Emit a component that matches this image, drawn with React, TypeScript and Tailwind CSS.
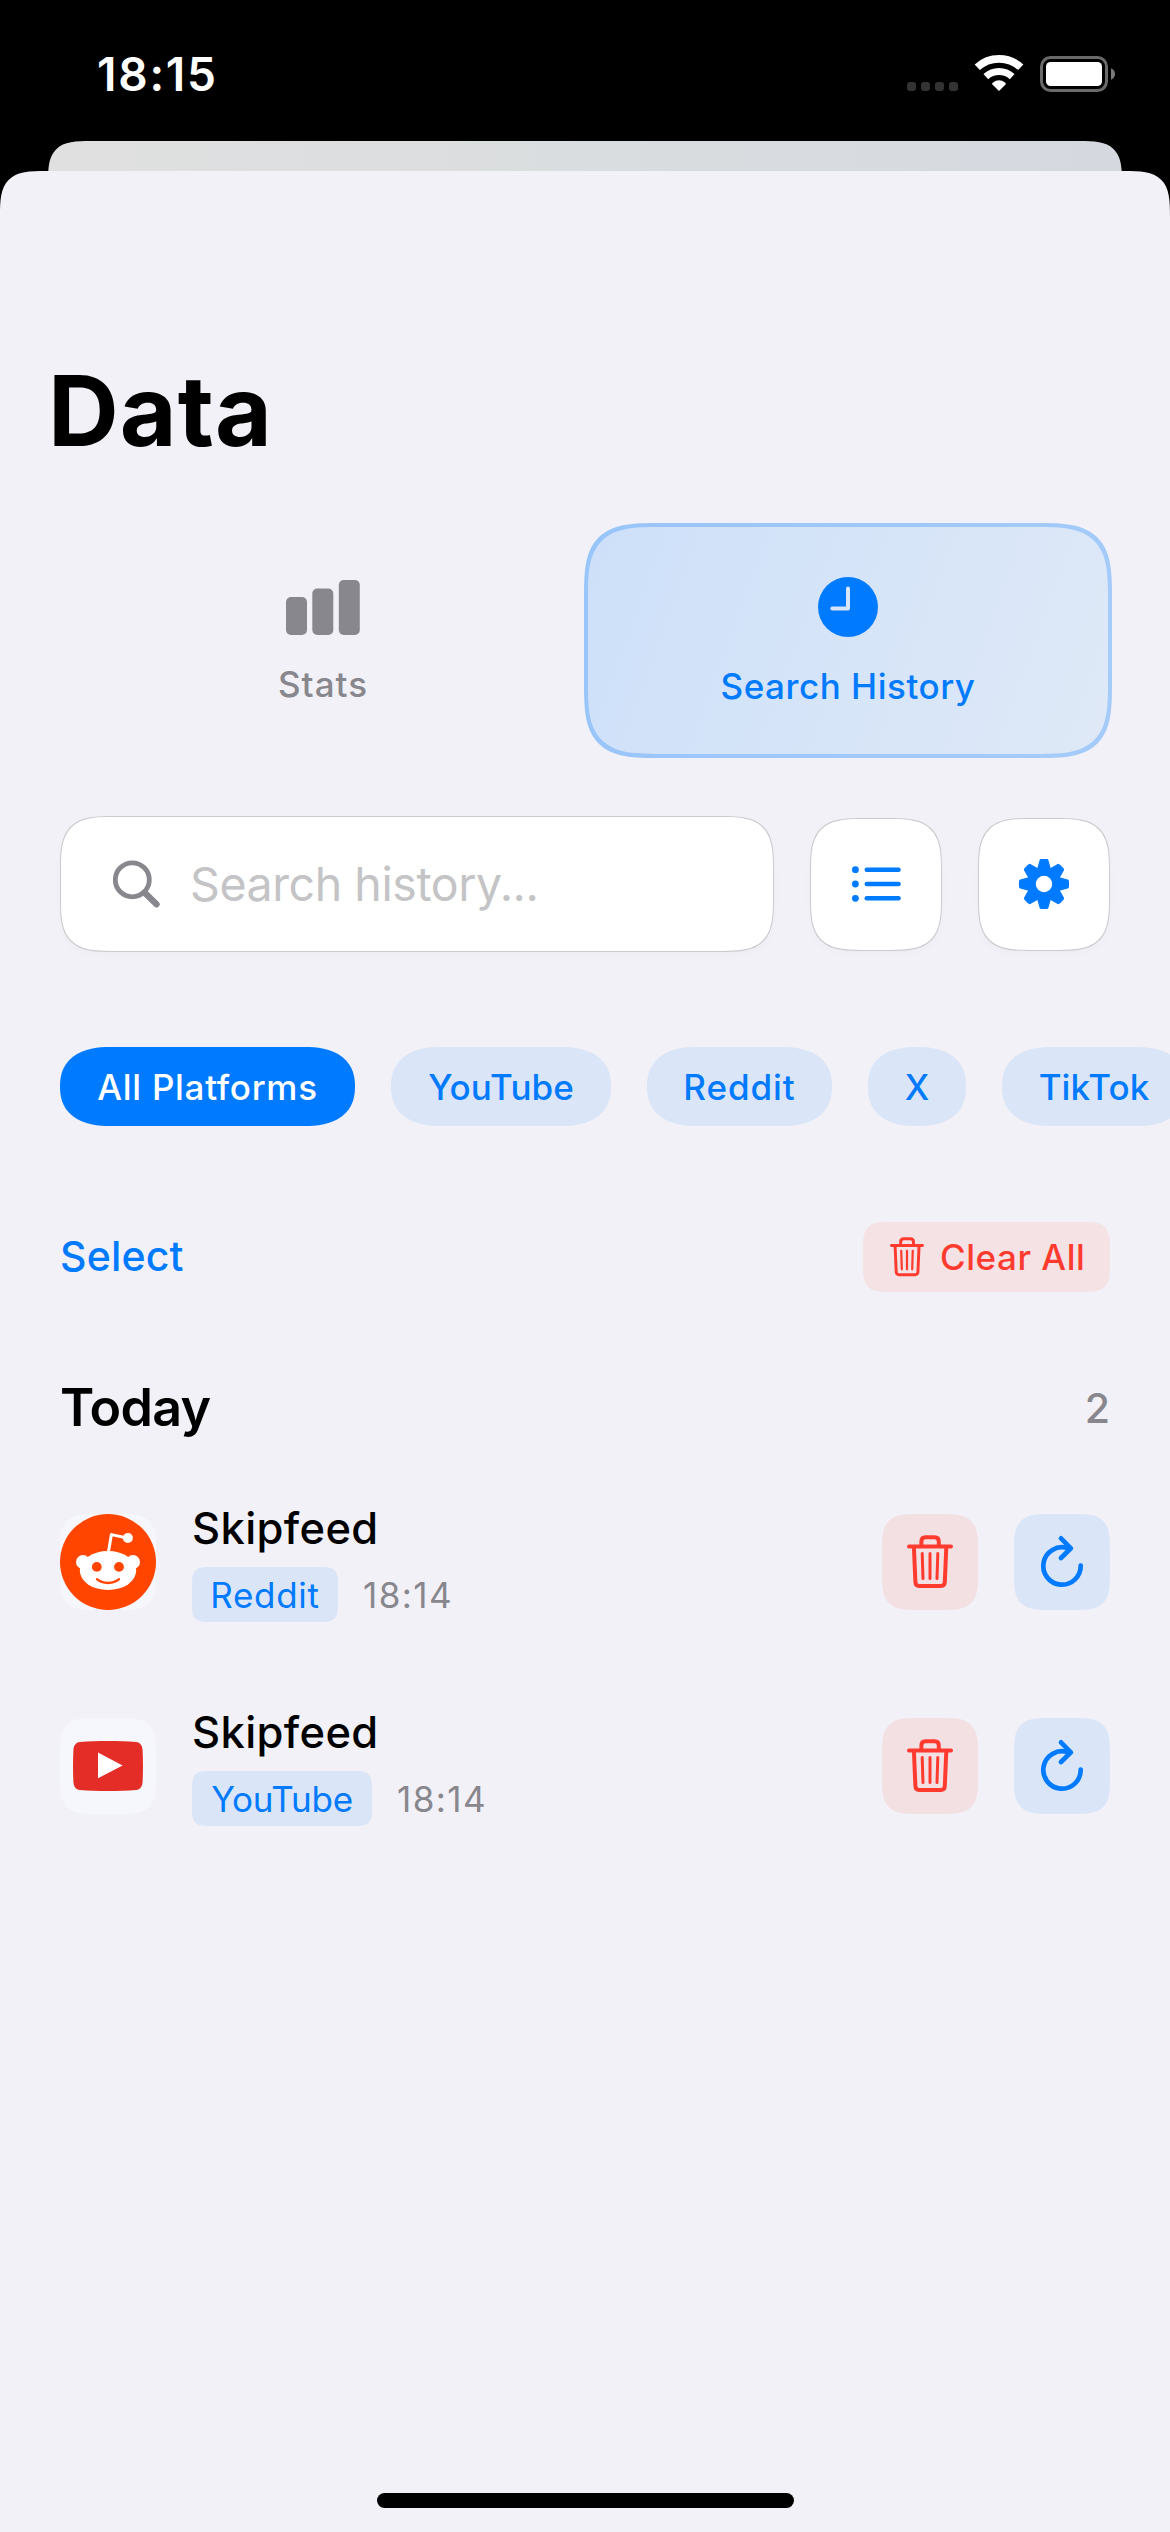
import type { ReactNode } from "react";

function StatusBar() {
  return (
    <header className="flex h-[141px] shrink-0 items-start justify-between pr-[55px] pl-[97px]">
      <div className="mt-[44px] text-[46px] leading-[60px] font-semibold tracking-[1.75px] text-white">18:15</div>
      <div className="mt-[54px] flex items-start">
        <div className="mt-[28px] flex gap-[5px]">
          <span className="h-[9px] w-[9px] rounded-[3px] bg-[#333333]" />
          <span className="h-[9px] w-[9px] rounded-[3px] bg-[#333333]" />
          <span className="h-[9px] w-[9px] rounded-[3px] bg-[#333333]" />
          <span className="h-[9px] w-[9px] rounded-[3px] bg-[#333333]" />
        </div>
        <svg className="ml-[16px]" width="50" height="38" viewBox="0 0 50 38" fill="none">
          <path d="M3.25 13.26A32.2 32.2 0 0 1 46.75 13.26" stroke="#fff" strokeWidth="7.7" />
          <path d="M11.83 22.62A19.5 19.5 0 0 1 38.17 22.62" stroke="#fff" strokeWidth="7" />
          <path d="M25 37L18.2 30.3Q17.8 29.1 19 28.4A10.7 10.7 0 0 1 31 28.4Q32.2 29.1 31.8 30.3Z" fill="#fff" />
        </svg>
        <svg className="mt-[2px] ml-[16px]" width="75" height="36" viewBox="0 0 75 36" fill="none">
          <rect x="1.5" y="1.5" width="65" height="33" rx="9" stroke="#6a6a6a" strokeWidth="3" />
          <rect x="6" y="6" width="56" height="24" rx="4.5" fill="#fff" />
          <path d="M71 12.3C73.4 13.3 75 15.4 75 18C75 20.6 73.4 22.7 71 23.7Z" fill="#7a7a7a" />
        </svg>
      </div>
    </header>
  );
}

function TrashIcon({ width, height }: { width: number; height: number }) {
  return (
    <svg width={width} height={height} viewBox="0 0 46 54" fill="none" stroke="#ff3b30" strokeLinecap="round" strokeLinejoin="round">
      <path d="M2 11.4H44" strokeWidth="4" />
      <path d="M14.4 11V6.4Q14.4 2.2 18.6 2.2H27.6Q31.8 2.2 31.8 6.4V11" strokeWidth="4" strokeLinecap="butt" />
      <path d="M6.9 12L8.4 47Q8.6 51 12.2 51H34Q37.6 51 37.8 47L39.3 12" strokeWidth="4" strokeLinecap="butt" />
      <path d="M15.2 18.6L16 43.6M23 18.6V43.6M30.8 18.6L30 43.6" strokeWidth="3" />
    </svg>
  );
}

function RefreshIcon() {
  return (
    <svg width="48" height="60" viewBox="0 0 48 60" fill="none" stroke="#007aff" strokeWidth="4.7" strokeLinecap="round" strokeLinejoin="round">
      <path d="M42.7 33.6A18.7 18.7 0 1 1 29.5 16.1" />
      <path d="M23 6.3L32.9 16.3L23 26" />
    </svg>
  );
}

function GearIcon() {
  return (
    <svg width="52" height="52" viewBox="-26 -26 52 52" fill="#007aff" stroke="#007aff" strokeWidth="3" strokeLinejoin="round">
      <circle r="15.8" />
      {[0, 45, 90, 135, 180, 225, 270, 315].map((a) => (
        <path key={a} d="M-5.3 -15L-3 -23.4Q0 -23.8 3 -23.4L5.3 -15Z" transform={`rotate(${a})`} />
      ))}
      <circle r="8.2" fill="#fff" stroke="none" />
    </svg>
  );
}

function ListIcon() {
  return (
    <svg width="50" height="38" viewBox="0 0 50 38" fill="#007aff">
      {[4.7, 19, 33.3].map((y) => (
        <g key={y}>
          <circle cx="4.4" cy={y} r="3.4" />
          <rect x="13.5" y={y - 2.2} width="36.3" height="4.4" rx="2.2" />
        </g>
      ))}
    </svg>
  );
}

function RedditLogo() {
  return (
    <svg width="96" height="96" viewBox="0 0 96 96">
      <circle cx="48" cy="48" r="48" fill="#ff4500" />
      <path d="M48.3 39L51.4 20.6L66 23.7" fill="none" stroke="#fff" strokeWidth="3" strokeLinejoin="round" />
      <circle cx="67.9" cy="24" r="5" fill="#fff" />
      <circle cx="23" cy="48" r="7" fill="#fff" />
      <circle cx="73" cy="48" r="7" fill="#fff" />
      <ellipse cx="48" cy="56.6" rx="28.2" ry="19.5" fill="#fff" />
      <circle cx="36.8" cy="52.9" r="4.9" fill="#ff4500" />
      <circle cx="59" cy="52.9" r="4.9" fill="#ff4500" />
      <path d="M37 65.2C42.5 70.2 53.5 70.2 59 65.2" fill="none" stroke="#ff4500" strokeWidth="2.4" strokeLinecap="round" />
    </svg>
  );
}

function YouTubeLogo() {
  return (
    <svg width="96" height="96" viewBox="0 0 96 96">
      <path
        d="M20 24C36 22.7 60 22.7 76 24C80.3 24.3 82.2 27.5 82.6 32C83.1 42 83.1 54 82.6 64C82.2 68.5 80.3 71.7 76 72C60 73.3 36 73.3 20 72C15.7 71.7 13.8 68.5 13.4 64C12.9 54 12.9 42 13.4 32C13.8 27.5 15.7 24.3 20 24Z"
        fill="#e52d27"
      />
      <path d="M38 34.6L62.6 47.5L38 60.3Z" fill="#fff" />
    </svg>
  );
}

function SquareButton({ children }: { children: ReactNode }) {
  return (
    <button className="flex h-[133px] w-[132px] items-center justify-center rounded-[55px] border border-[#cbcbcf] bg-white shadow-[0_3px_8px_rgba(0,0,0,0.02)] [corner-shape:superellipse(1.7)]">
      {children}
    </button>
  );
}

function Pill({ label, className }: { label: string; className: string }) {
  return (
    <button
      className={`flex h-[79px] shrink-0 items-center justify-center rounded-[50px/39.5px] text-[35px] leading-[42px] font-medium [corner-shape:superellipse(1.25)] ${className}`}
    >
      {label}
    </button>
  );
}

interface EntryProps {
  logo: ReactNode;
  platform: string;
  badgeClass: string;
}

function HistoryRow({ logo, platform, badgeClass }: EntryProps) {
  return (
    <div className="flex h-[122px] items-center">
      <div className="h-[96px] w-[96px] shrink-0 overflow-hidden rounded-[36px] bg-[#f5f7fc] [corner-shape:superellipse(1.7)]">{logo}</div>
      <div className="ml-[36px] flex h-[122px] flex-1 flex-col">
        <div className="text-[43.5px] leading-[54px] font-medium tracking-[0.37px] text-black">Skipfeed</div>
        <div className="mt-[12px] flex items-center gap-[25px]">
          <span
            className={`flex h-[55px] items-center justify-center rounded-[18px] bg-[#dae5f7] text-[35px] leading-[42px] text-[#007aff] [corner-shape:superellipse(1.7)] ${badgeClass}`}
          >
            {platform}
          </span>
          <span className="text-[35px] leading-[42px] tracking-[1.45px] text-[#88878d]">18:14</span>
        </div>
      </div>
      <button className="flex h-[96px] w-[96px] items-center justify-center rounded-[36px] bg-[#f3e0e3] [corner-shape:superellipse(1.7)]">
        <TrashIcon width={46} height={54} />
      </button>
      <button className="ml-[36px] flex h-[96px] w-[96px] items-center justify-center rounded-[36px] bg-[#dae5f7] [corner-shape:superellipse(1.7)]">
        <RefreshIcon />
      </button>
    </div>
  );
}

export default function App() {
  return (
    <div className="flex h-[2532px] w-[1170px] flex-col overflow-hidden bg-black font-['Inter',sans-serif]">
      <StatusBar />
      <div className="mx-[48px] h-[30px] shrink-0 overflow-hidden">
        <div className="h-[90px] rounded-t-[43px] bg-linear-to-r from-[#e0e0e0] via-[#dadddf] to-[#d5d8df] [corner-shape:superellipse(1.7)]" />
      </div>
      <main className="flex flex-1 flex-col rounded-t-[46px] bg-[#f2f1f7] px-[60px] [corner-shape:superellipse(1.7)]">
        <h1 className="mt-[180px] -ml-[12px] text-[98px] leading-[120px] font-bold tracking-[1px] text-black">Data</h1>

        <nav className="mt-[52px] -mr-[2px] flex h-[235px] shrink-0">
          <button className="flex w-[524px] flex-col items-center pt-[57px] pl-[2px] text-[#88878d]">
            <svg width="74" height="55" viewBox="0 0 74 55" fill="#88878d">
              <rect x="0" y="17" width="21" height="38" rx="5" />
              <rect x="26.3" y="8.5" width="21" height="46.5" rx="5" />
              <rect x="52.8" y="0" width="21" height="55" rx="5" />
            </svg>
            <span className="mt-[28px] text-[35px] leading-[42px] font-medium tracking-[1px]">Stats</span>
          </button>
          <button className="flex flex-1 flex-col items-center rounded-[76px] border-4 border-[rgba(0,122,255,0.26)] bg-linear-[110deg] from-[#cde0f9] to-[#dfe9f7] bg-origin-border pt-[50px] text-[#007aff] [corner-shape:superellipse(1.7)]">
            <svg width="60" height="60" viewBox="0 0 60 60">
              <circle cx="30" cy="30" r="30" fill="#007aff" />
              <path d="M30 11.5V31.4H14.3" fill="none" stroke="#d7e5f8" strokeWidth="4" strokeLinecap="round" strokeLinejoin="round" />
            </svg>
            <span className="mt-[28px] text-[35px] leading-[42px] font-medium tracking-[0.53px]">Search History</span>
          </button>
        </nav>

        <div className="mt-[58px] flex h-[136px] shrink-0 items-center gap-[36px]">
          <div className="flex h-[136px] w-[714px] items-center rounded-[55px] border border-[#cbcbcf] bg-white pl-[52px] shadow-[0_3px_8px_rgba(0,0,0,0.02)] [corner-shape:superellipse(1.7)]">
            <svg width="48" height="48" viewBox="0 0 48 48" fill="none" stroke="#88878d" strokeLinecap="round">
              <circle cx="19.3" cy="19.8" r="17" strokeWidth="4.8" />
              <path d="M32 33L43.5 44.3" strokeWidth="6.4" />
            </svg>
            <span className="ml-[29px] text-[46.5px] leading-[56px] tracking-[-0.43px] text-[#c4c4c6]">Search history...</span>
          </div>
          <SquareButton>
            <ListIcon />
          </SquareButton>
          <SquareButton>
            <GearIcon />
          </SquareButton>
        </div>

        <div className="mt-[95px] -mr-[60px] flex shrink-0 gap-[36px] overflow-hidden">
          <Pill label="All Platforms" className="w-[295px] bg-[#007aff] tracking-[0.7px] text-white" />
          <Pill label="YouTube" className="w-[220px] bg-[#dae5f7] tracking-[0.04px] text-[#007aff]" />
          <Pill label="Reddit" className="w-[185px] bg-[#dae5f7] tracking-[0.93px] text-[#007aff]" />
          <Pill label="X" className="w-[98px] bg-[#dae5f7] text-[#007aff]" />
          <Pill label="TikTok" className="w-[184px] bg-[#dae5f7] tracking-[0.1px] text-[#007aff]" />
        </div>

        <div className="mt-[96px] flex h-[70px] shrink-0 items-center justify-between">
          <button className="pb-[2px] text-[41px] leading-[50px] font-medium tracking-[0.17px] text-[#007aff]">Select</button>
          <button className="flex h-[70px] w-[247px] items-center gap-[16px] rounded-[27px] bg-[#f4e2e5] pb-[1px] pl-[27px] text-[35px] leading-[42px] font-medium tracking-[0.53px] whitespace-nowrap text-[#ff3b30] [corner-shape:superellipse(1.7)]">
            <TrashIcon width={34} height={40} />
            Clear All
          </button>
        </div>

        <div className="mt-[84px] flex h-[64px] shrink-0 items-center justify-between">
          <h2 className="text-[52px] leading-[64px] font-semibold tracking-[-0.72px] text-black">Today</h2>
          <span className="text-[41px] leading-[50px] font-medium text-[#88878d]">2</span>
        </div>

        <div className="mt-[61px] flex flex-col gap-[82px]">
          <HistoryRow logo={<RedditLogo />} platform="Reddit" badgeClass="w-[146px] tracking-[0.69px]" />
          <HistoryRow logo={<YouTubeLogo />} platform="YouTube" badgeClass="w-[180px] tracking-[-0.27px]" />
        </div>

        <div className="mt-auto mb-[24px] h-[15px] w-[417px] self-center rounded-full bg-black" />
      </main>
    </div>
  );
}
